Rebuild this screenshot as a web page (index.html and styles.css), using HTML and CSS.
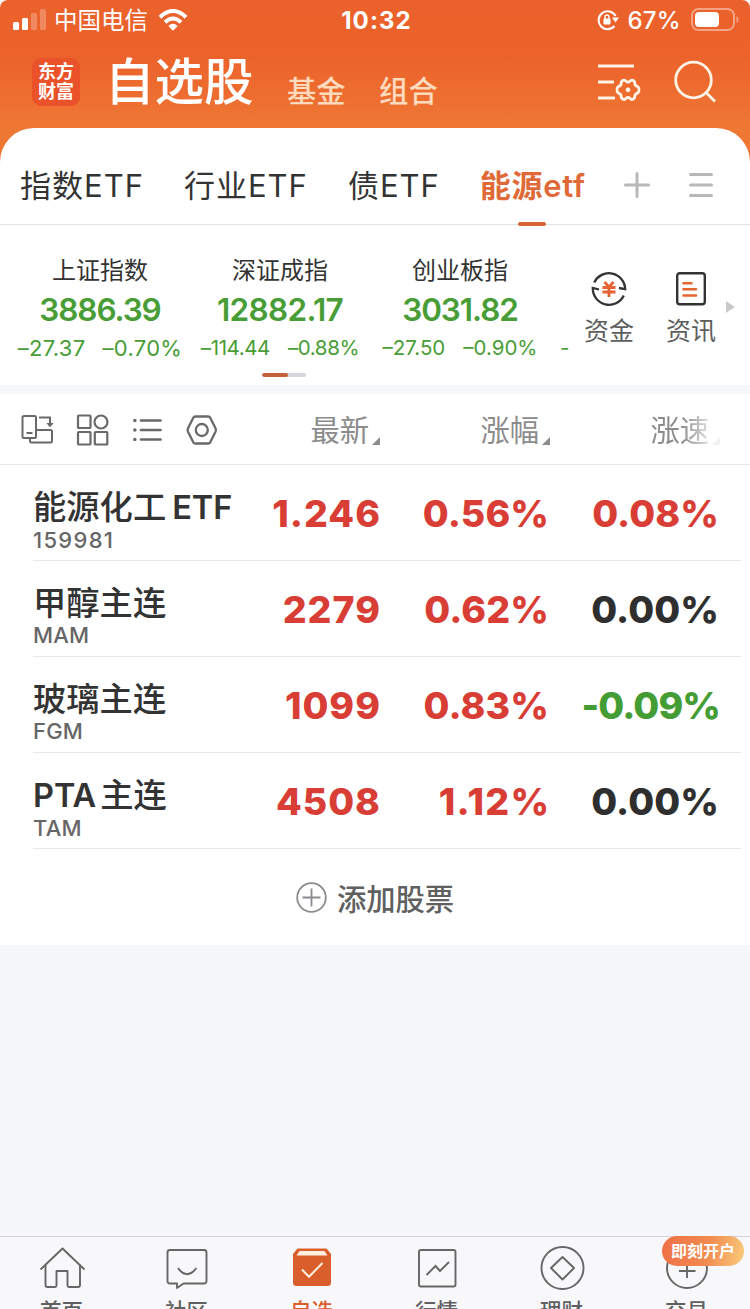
FILE: index.html
```html
<!DOCTYPE html>
<html lang="zh-CN">
<head>
<meta charset="utf-8">
<title>自选股</title>
<link rel="stylesheet" href="styles.css">
</head>
<body>
<div class="app">
  <header class="hero">
    <div class="status">
      <div class="status-left">
        <svg class="signal" width="33" height="22" viewBox="0 0 33 22" fill="#fff"><rect x="0" y="13" width="6" height="8" rx="1.5"/><rect x="9" y="9" width="6" height="12" rx="1.5"/><rect x="18" y="4" width="6" height="17" rx="1.5" opacity=".25"/><rect x="27" y="0" width="6" height="21" rx="1.5" opacity=".25"/></svg>
        <span class="carrier">中国电信</span>
        <svg width="30" height="22" viewBox="0 0 30 22" fill="none" stroke="#fff" stroke-width="4"><path d="M2 8.2Q15-4.2 28 8.2"/><path d="M7 13.2Q15 5.8 23 13.2"/><path d="M10.3 17Q15 12.6 19.7 17L15 21.8Z" fill="#fff" stroke="none"/></svg>
      </div>
      <div class="clock">10:32</div>
      <div class="status-right">
        <svg width="22" height="22" viewBox="0 0 22 22" fill="none" stroke="#fff" stroke-width="2"><path d="M18.600 7A9 9 0 1 0 17.500 17"/><path d="M15 8.500h7l-3.500 5z" fill="#fff" stroke="none"/><rect x="6.500" y="9.500" width="7" height="6" rx="1" fill="#fff" stroke="none"/><path d="M8 10V8q0-2 2-2t2 2v2" stroke-width="1.400"/></svg>
        <span class="percent">67%</span>
        <svg width="49" height="24" viewBox="0 0 49 24"><rect x="1" y="1" width="42" height="21" rx="6.500" fill="none" stroke="#fff" stroke-opacity=".42" stroke-width="2"/><rect x="4" y="4" width="24" height="15" rx="4" fill="#fff"/><path d="M45.500 8q2 .7 2 3.500t-2 3.500z" fill="#fff" opacity=".42"/></svg>
      </div>
    </div>
    <div class="titlebar">
      <div class="logo"><span>东方</span><span>财富</span></div>
      <h1 class="title">自选股</h1>
      <span class="subtitle">基金</span>
      <span class="subtitle">组合</span>
      <svg class="tune" width="43" height="40" viewBox="0 0 43 40" fill="none" stroke="#fff3e6" stroke-width="2.800"><path d="M0 3h36M0 19h16M0 35h17"/><path stroke-width="2.800" stroke-linejoin="round" d="M25.200 17.300Q27 16.700 28 18.300Q30 20 32 18.300Q33 16.700 34.800 17.300Q37 18.300 36.800 20.500Q37 22.600 39.300 23.300Q41 24.200 41 26.800Q41 29.400 39.300 30.300Q37 31 36.800 33.100Q37 35.300 34.800 36.300Q33 36.900 32 35.300Q30 33.600 28 35.300Q27 36.900 25.200 36.300Q23 35.300 23.200 33.100Q23 31 20.700 30.300Q19 29.400 19 26.800Q19 24.200 20.700 23.300Q23 22.600 23.200 20.500Q23 18.300 25.200 17.300Z"/><circle cx="30" cy="26.800" r="2.400" fill="#fff3e6" stroke="none"/></svg>
      <svg width="43" height="44" viewBox="0 0 43 44" fill="none" stroke="#fff3e6" stroke-width="2.800"><circle cx="19.500" cy="20" r="17.800"/><path d="M32 32.500l9 9"/></svg>
    </div>
  </header>

  <main class="sheet">
    <nav class="tabs">
      <span class="tab">指数ETF</span>
      <span class="tab">行业ETF</span>
      <span class="tab">债ETF</span>
      <span class="tab active">能源etf</span>
      <svg class="plus" width="26" height="26" viewBox="0 0 26 26" stroke="#b8b8b8" stroke-width="3" stroke-linecap="round"><path d="M1.500 13h23M13 1.500v23"/></svg>
      <svg width="24" height="26" viewBox="0 0 24 26" stroke="#b8b8b8" stroke-width="3" stroke-linecap="round"><path d="M1.500 2.500h21M1.500 13h21M1.500 23.500h21"/></svg>
    </nav>

    <section class="market">
      <div class="indices">
        <div class="index first"><div class="index-name">上证指数</div><div class="index-value">3886.39</div><div class="index-change"><span>–27.37</span><span>–0.70%</span></div></div>
        <div class="index second"><div class="index-name">深证成指</div><div class="index-value">12882.17</div><div class="index-change"><span>–114.44</span><span>–0.88%</span></div></div>
        <div class="index"><div class="index-name">创业板指</div><div class="index-value">3031.82</div><div class="index-change"><span>–27.50</span><span>–0.90%</span></div></div>
        <div class="index-next">-</div>
      </div>
      <div class="shortcut">
        <svg width="36" height="36" viewBox="0 0 36 36" fill="none" stroke="#333" stroke-width="2.300"><path d="M3.200 11.500A16.300 16.300 0 0 1 34.200 18.200L28 17"/><path d="M32.800 24.500A16.300 16.300 0 0 1 1.800 17L8 18.500"/><path stroke="#e56431" stroke-width="2.800" d="M13.500 11l4.500 5l4.500-5M11.500 16.500h13M11.500 21h13M18 15v11"/></svg>
        <span>资金</span>
      </div>
      <div class="shortcut">
        <svg width="36" height="36" viewBox="0 0 36 36" fill="none"><rect x="4.200" y="2.200" width="27.600" height="31" rx="2.500" stroke="#333" stroke-width="2.400"/><path stroke="#e56431" stroke-width="2.600" stroke-linecap="round" d="M10.500 12.300h8M10.500 18.300h12.500M10.500 24.500h12.500"/></svg>
        <span>资讯</span>
      </div>
      <i class="more"></i>
      <div class="pager"><i></i></div>
    </section>

    <section class="list">
      <div class="list-head">
        <div class="tools">
          <svg width="34" height="32" viewBox="0 0 34 32" fill="none" stroke="#696969" stroke-width="2"><rect x="2.500" y="2" width="13.500" height="22" rx="1.500"/><path d="M6.500 19h6"/><path d="M16 16h14.500q1.500 0 1.500 1.500V27q0 1.500-1.500 1.500h-19Q10 28.500 10 27v-3"/><path d="M19 3.500h11V12"/><path d="M26.500 9h7L30 13.500z" fill="#696969" stroke="none"/></svg>
          <svg width="34" height="32" viewBox="0 0 34 32" fill="none" stroke="#696969" stroke-width="2.200"><rect x="3" y="1.500" width="12.500" height="12.500" rx=".8"/><circle cx="26" cy="8" r="6.500"/><rect x="3" y="18" width="12.500" height="12.500" rx=".8"/><rect x="19.800" y="18" width="12.500" height="12.500" rx=".8"/></svg>
          <svg width="34" height="32" viewBox="0 0 34 32" fill="none" stroke="#696969" stroke-linecap="round"><path stroke-width="2.700" d="M11 6.500h19.500M11 16h19.500M11 25.500h19.500"/><path stroke-width="3.400" d="M4.800 6.500h.1M4.800 16h.1M4.800 25.500h.1"/></svg>
          <svg width="34" height="32" viewBox="0 0 34 32" fill="none" stroke="#696969" stroke-width="2.300" stroke-linejoin="round"><path d="M11.300 2.500h12.900q1.300 0 2 1.200l5.300 10.500q.8 1.800 0 3.600l-5.300 10.500q-.7 1.200-2 1.200H11.300q-1.300 0-2-1.200L4 17.800q-.8-1.800 0-3.600L9.300 3.700q.7-1.200 2-1.200z"/><circle cx="17.800" cy="16" r="6"/></svg>
        </div>
        <div class="col">最新</div>
        <div class="col">涨幅</div>
        <div class="col faded">涨速</div>
      </div>
      <div class="row"><div class="stock"><div class="name">能源化工<b class="latin tail">ETF</b></div><div class="code digits">159981</div></div><div class="num price up">1.246</div><div class="num up">0.56%</div><div class="num up">0.08%</div></div>
      <div class="row"><div class="stock"><div class="name">甲醇主连</div><div class="code">MAM</div></div><div class="num price up">2279</div><div class="num up">0.62%</div><div class="num">0.00%</div></div>
      <div class="row"><div class="stock"><div class="name">玻璃主连</div><div class="code">FGM</div></div><div class="num price up">1099</div><div class="num up">0.83%</div><div class="num down">-0.09%</div></div>
      <div class="row"><div class="stock"><div class="name"><b class="latin lead">PTA</b>主连</div><div class="code">TAM</div></div><div class="num price up">4508</div><div class="num wide up">1.12%</div><div class="num">0.00%</div></div>
      <div class="add">
        <svg width="31" height="31" viewBox="0 0 31 31" fill="none" stroke="#8b8b90" stroke-width="1.800"><circle cx="15.500" cy="15.500" r="14.300"/><path d="M6.500 15.500h18M15.500 6.500v18"/></svg>
        <span>添加股票</span>
      </div>
    </section>
  </main>

  <footer class="tabbar">
    <div class="item"><svg width="48" height="46" viewBox="0 0 48 46" fill="none" stroke="#666" stroke-width="1.900" stroke-linejoin="round"><path d="M2.500 24.500L24.500 3.500L46.500 24.500"/><path d="M7.500 20v20q0 2 2 2h7.500q1.500 0 1.500-1.500V26h11v14.500q0 1.500 1.500 1.500h9q2 0 2-2V20"/></svg><span>首页</span></div>
    <div class="item"><svg width="48" height="46" viewBox="0 0 48 46" fill="none" stroke="#666" stroke-width="1.900" stroke-linejoin="round"><path d="M7 5h34q2.500 0 2.500 2.500V36q0 2.500-2.500 2.500H20.500L14 43v-4.500H7q-2.500 0-2.500-2.500V7.500Q4.500 5 7 5z"/><path d="M15 23q9 12.500 18.500 0"/></svg><span>社区</span></div>
    <div class="item current"><svg width="48" height="46" viewBox="0 0 48 46"><path d="M9.500 3.500h29L43 9v28.500q0 3.500-3.500 3.500H8.500Q5 41 5 37.500V9z" fill="#da5e2b"/><path d="M11.500 6h25l3 4.500h-31z" fill="#fff0df"/><path d="M14 24.500l7 7.200L34.500 18" fill="none" stroke="#fff0df" stroke-width="2"/></svg><span>自选</span></div>
    <div class="item"><svg width="48" height="46" viewBox="0 0 48 46" fill="none" stroke="#666" stroke-width="1.900"><rect x="6" y="5" width="36.500" height="36.500" rx="2"/><path d="M13.500 30l9-9l4.500 5L36 17"/></svg><span>行情</span></div>
    <div class="item"><svg width="48" height="46" viewBox="0 0 48 46" fill="none" stroke="#666" stroke-width="1.900" stroke-linejoin="round"><circle cx="24.500" cy="23" r="21"/><path d="M24.500 12L36 23L24.500 34.500L13 23z"/></svg><span>理财</span></div>
    <div class="item"><svg width="48" height="46" viewBox="0 0 48 46" fill="none" stroke="#666" stroke-width="1.900"><circle cx="24" cy="23" r="20"/><path d="M16 26h16.500M24 18v15"/></svg><span>交易</span><em class="badge">即刻开户</em></div>
  </footer>
</div>
</body>
</html>
```
FILE: styles.css
```css
* { box-sizing: border-box; }
html, body { margin: 0; background: #fff; }
body { height: 1309px; overflow: hidden; font-family: Inter, "Noto Sans CJK SC", sans-serif; color: #333; }
svg { display: block; flex: none; }
i, em, b { font-style: normal; }

.app { width: 750px; height: 1309px; display: flex; flex-direction: column; overflow: hidden; border-radius: 8px 8px 0 0; background: #f6f7fa; }

.hero { height: 170px; margin-bottom: -42px; flex: none; background: linear-gradient(#eb612b 0, #eb622b 55px, #ef7734 128px); color: #fff; }
.status { height: 40px; padding: 0 10px 0 13px; display: grid; grid-template-columns: 1fr auto 1fr; align-items: center; }
.status-left, .status-right { display: flex; align-items: center; }
.status-right { justify-content: flex-end; }
.carrier { margin: 2px 10px 0 8px; font-size: 23.500px; line-height: 38px; }
.signal { margin-top: -1px; }
.clock { padding-top: 2px; font-size: 24px; font-weight: 700; line-height: 38px; letter-spacing: 1.1px; }
.percent { margin: 2px 10px 0 8px; font-size: 24px; font-weight: 500; line-height: 38px; letter-spacing: .3px; }

.titlebar { height: 88px; padding: 0 33px 4px 32px; display: flex; align-items: center; }
.logo { width: 48px; height: 48px; margin-right: 25px; padding: 4px 0 0; border-radius: 9px; background: #ea5229; display: flex; flex-direction: column; align-items: center; font-size: 18px; font-weight: 700; line-height: 20px; }
.title { margin: 0; font-size: 49.500px; font-weight: 500; line-height: 60px; }
.subtitle { margin: 19px 0 0 33.500px; font-size: 29.300px; line-height: 36px; font-weight: 500; color: #ffdabd; }
.tune { margin: 1px 33px 0 auto; }

.sheet { flex: none; position: relative; border-radius: 34px 34px 0 0; background: #fff; }
.tabs { height: 97px; padding: 0 36px 0 20px; border-bottom: 1px solid #e2e2e2; display: flex; align-items: flex-start; font-size: 31px; line-height: 44px; letter-spacing: 1px; }
.tabs svg { margin-top: 44px; }
.tab { margin: 36px 40px 0 0; }
.tab.active { position: relative; height: 61px; margin-right: 38px; color: #df6a38; font-weight: 600; letter-spacing: .7px; }
.tab.active::after { content: ""; position: absolute; left: 38px; bottom: -1px; width: 28px; height: 4px; border-radius: 2px; background: #d5643a; }
.plus { margin-right: 39px; }

.market { position: relative; height: 169px; border-bottom: 9px solid #f6f7f9; padding-left: 10px; display: flex; align-items: flex-start; }
.indices { width: 560px; flex: none; overflow: hidden; display: flex; color: #489d36; text-align: center; }
.index { width: 180px; flex: none; }
.index-name { padding-top: 28px; font-size: 24px; line-height: 35px; color: #333; }
.index-value { font-size: 31.500px; font-weight: 600; line-height: 43px; letter-spacing: -1.100px; }
.index-change { display: flex; justify-content: center; gap: 18px; font-size: 20.500px; line-height: 34px; white-space: nowrap; }
.first .index-change { font-size: 22px; letter-spacing: .3px; gap: 17px; }
.second .index-value { letter-spacing: -.7px; }
.second .index-change { letter-spacing: -.4px; }
.index-next { padding: 106px 0 0 10px; font-size: 20.500px; line-height: 34px; }
.shortcut { width: 82px; padding-top: 46px; display: flex; flex-direction: column; align-items: center; gap: 6px; font-size: 25px; line-height: 36px; color: #5e5e5e; margin-left: -2px; margin-right: 2px; }
.more { margin: 76px 0 0 -8px; border: 6px solid transparent; border-left: 9px solid #c9c9c9; border-right: 0; }
.pager { position: absolute; left: 262px; top: 148px; width: 44px; height: 4px; border-radius: 2px; background: #d5d5dd; overflow: hidden; }
.pager i { display: block; width: 26px; height: 4px; background: #c5613a; border-radius: 2px; }

.list-head { height: 71px; border-bottom: 1px solid #e8e8e8; display: grid; grid-template-columns: 211px 169px 170px 170px; align-items: center; }
.tools { width: 220px; display: flex; gap: 20.800px; padding-left: 20px; margin-top: 1px; }
.col { display: flex; justify-content: flex-end; align-items: flex-end; gap: 3px; font-size: 29.300px; line-height: 44px; color: #8c8c8c; padding-top: 3px; }
.col::after { content: ""; margin-bottom: 8px; border: 4px solid; border-color: transparent currentColor currentColor transparent; }
.faded { -webkit-mask-image: linear-gradient(90deg, #000 132px, rgba(0,0,0,.12) 165px); mask-image: linear-gradient(90deg, #000 132px, rgba(0,0,0,.12) 165px); }

.row { height: 96px; margin: 0 9px 0 33px; border-bottom: 1px solid #e8e8e8; display: grid; grid-template-columns: 178px 169px 169px 170px; align-items: start; }
.stock { white-space: nowrap; }
.name { padding-top: 20px; font-size: 33.300px; line-height: 44px; font-weight: 500; }
.latin { font-weight: 600; font-size: 32.500px; }
.tail { margin-left: 6px; }
.lead { margin-right: 4px; }
.code { font-size: 22px; line-height: 26px; margin-top: -3px; color: #666; font-weight: 450; letter-spacing: .2px; }
.digits { letter-spacing: 1.300px; }
.num { padding-top: 27px; text-align: right; font-size: 37.500px; line-height: 44px; font-weight: 800; color: #2f2f2f; letter-spacing: .1px; }
.price { letter-spacing: 1px; margin-right: -1px; }
.wide { letter-spacing: 1.200px; margin-right: -1.200px; }
.up { color: #d83e35; }
.down { color: #449d34; letter-spacing: -.9px; margin-right: -1px; }
.add { height: 96px; display: flex; align-items: center; justify-content: center; gap: 10px; font-size: 29.300px; font-weight: 500; color: #606060; }

.tabbar { height: 73px; flex: none; margin-top: auto; border-top: 1px solid #d2d4d7; background: #f8f8fb; display: grid; grid-template-columns: repeat(6, 125px); margin-left: -1px; }
.item { position: relative; display: flex; flex-direction: column; align-items: center; padding-top: 8px; font-size: 21.500px; line-height: 32px; font-weight: 500; color: #606060; white-space: nowrap; }
.item span { margin-top: 4px; }
.current { color: #da5e2b; }
.badge { position: absolute; left: 38px; top: -1px; width: 82px; height: 30px; border-radius: 15px; background: linear-gradient(100deg, #ef7045, #f28a50 55%, #f9cc7b); color: #fff; font-size: 16px; font-weight: 700; line-height: 30px; text-align: center; }
```
